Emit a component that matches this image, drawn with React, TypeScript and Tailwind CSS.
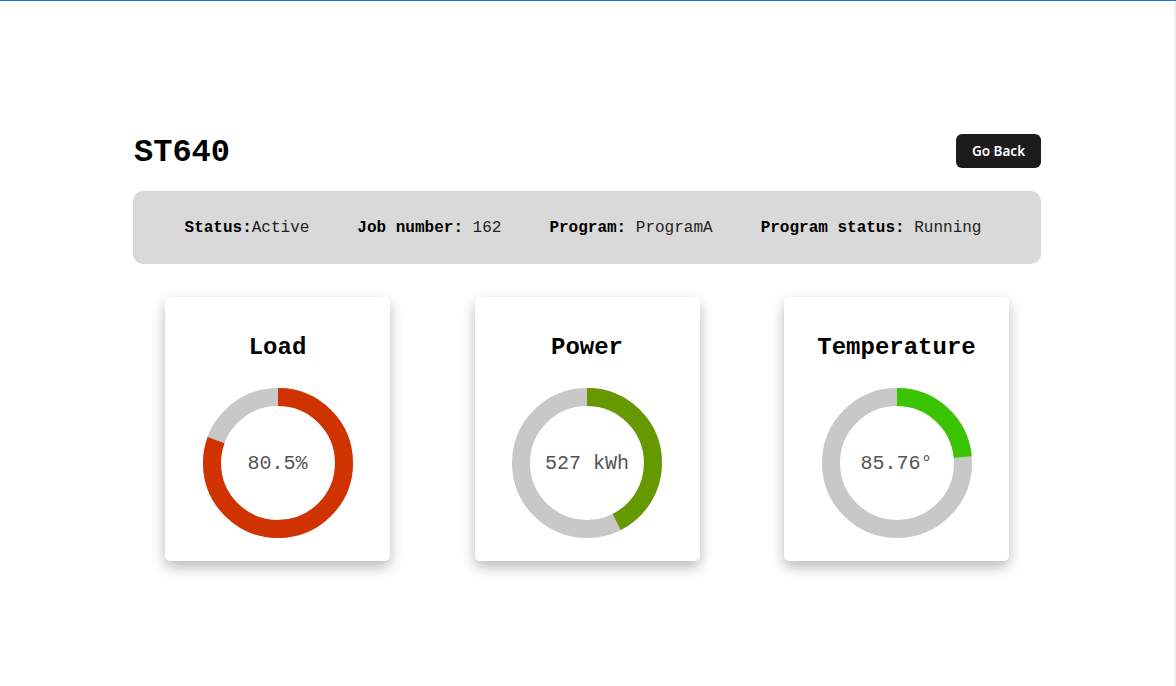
import React from "react";

const mono = { fontFamily: '"Liberation Mono", "Courier New", monospace' };

function Donut({ pct, color, label }: { pct: number; color: string; label: string }) {
  const r = 66;
  const c = 2 * Math.PI * r;
  return (
    <div className="relative w-[150px] h-[150px]">
      <svg width="150" height="150" viewBox="0 0 150 150">
        <circle cx="75" cy="75" r={r} fill="none" stroke="#c8c8c8" strokeWidth="18" />
        <circle
          cx="75"
          cy="75"
          r={r}
          fill="none"
          stroke={color}
          strokeWidth="18"
          strokeDasharray={`${c * pct} ${c}`}
          transform="rotate(-90 75 75)"
        />
      </svg>
      <div
        className="absolute inset-0 flex items-center justify-center text-[20px] text-[#555] pt-px"
        style={mono}
      >
        {label}
      </div>
    </div>
  );
}

function Card({ title, pct, color, label }: { title: string; pct: number; color: string; label: string }) {
  return (
    <div className="w-[225px] h-[264px] bg-white rounded-[5px] shadow-[0_6px_14px_rgba(0,0,0,0.28)] flex flex-col items-center pt-[35px]">
      <div className="text-[24px] leading-[32px] font-bold text-black" style={mono}>
        {title}
      </div>
      <div className="mt-[24px]">
        <Donut pct={pct} color={color} label={label} />
      </div>
    </div>
  );
}

export default function App() {
  return (
    <div className="relative w-full min-h-[686px] bg-white border-t border-[#1a73d9]">
      <div className="absolute right-0 top-0 bottom-0 w-[2px] bg-[#efefef]" />
      <div className="w-[908px] ml-[133px] pt-[133px]">
        <div className="flex items-center justify-between h-[34px]">
          <div className="text-[32px] font-bold text-black leading-none pl-px pt-[3px]" style={mono}>
            ST640
          </div>
          <button
            className="h-[34px] w-[85px] rounded-[6px] bg-[#1c1c1c] text-white text-[13.5px] font-semibold"
            style={{ fontFamily: '"Noto Sans", "Open Sans", sans-serif' }}
          >
            Go Back
          </button>
        </div>
        <div
          className="mt-[23px] h-[73px] rounded-[10px] bg-[#d9d9d9] flex items-center justify-center gap-12 pr-2 pt-px text-[16px] text-[#222]"
          style={mono}
        >
          <span>
            <b className="text-black">Status:</b>Active
          </span>
          <span>
            <b className="text-black">Job number:</b> 162
          </span>
          <span>
            <b className="text-black">Program:</b> ProgramA
          </span>
          <span>
            <b className="text-black">Program status:</b> Running
          </span>
        </div>
        <div className="mt-[33px] flex justify-between px-8">
          <Card title="Load" pct={0.805} color="#d03200" label="80.5%" />
          <Card title="Power" pct={0.425} color="#669900" label="527 kWh" />
          <Card title="Temperature" pct={0.235} color="#3cc300" label="85.76°" />
        </div>
      </div>
    </div>
  );
}
